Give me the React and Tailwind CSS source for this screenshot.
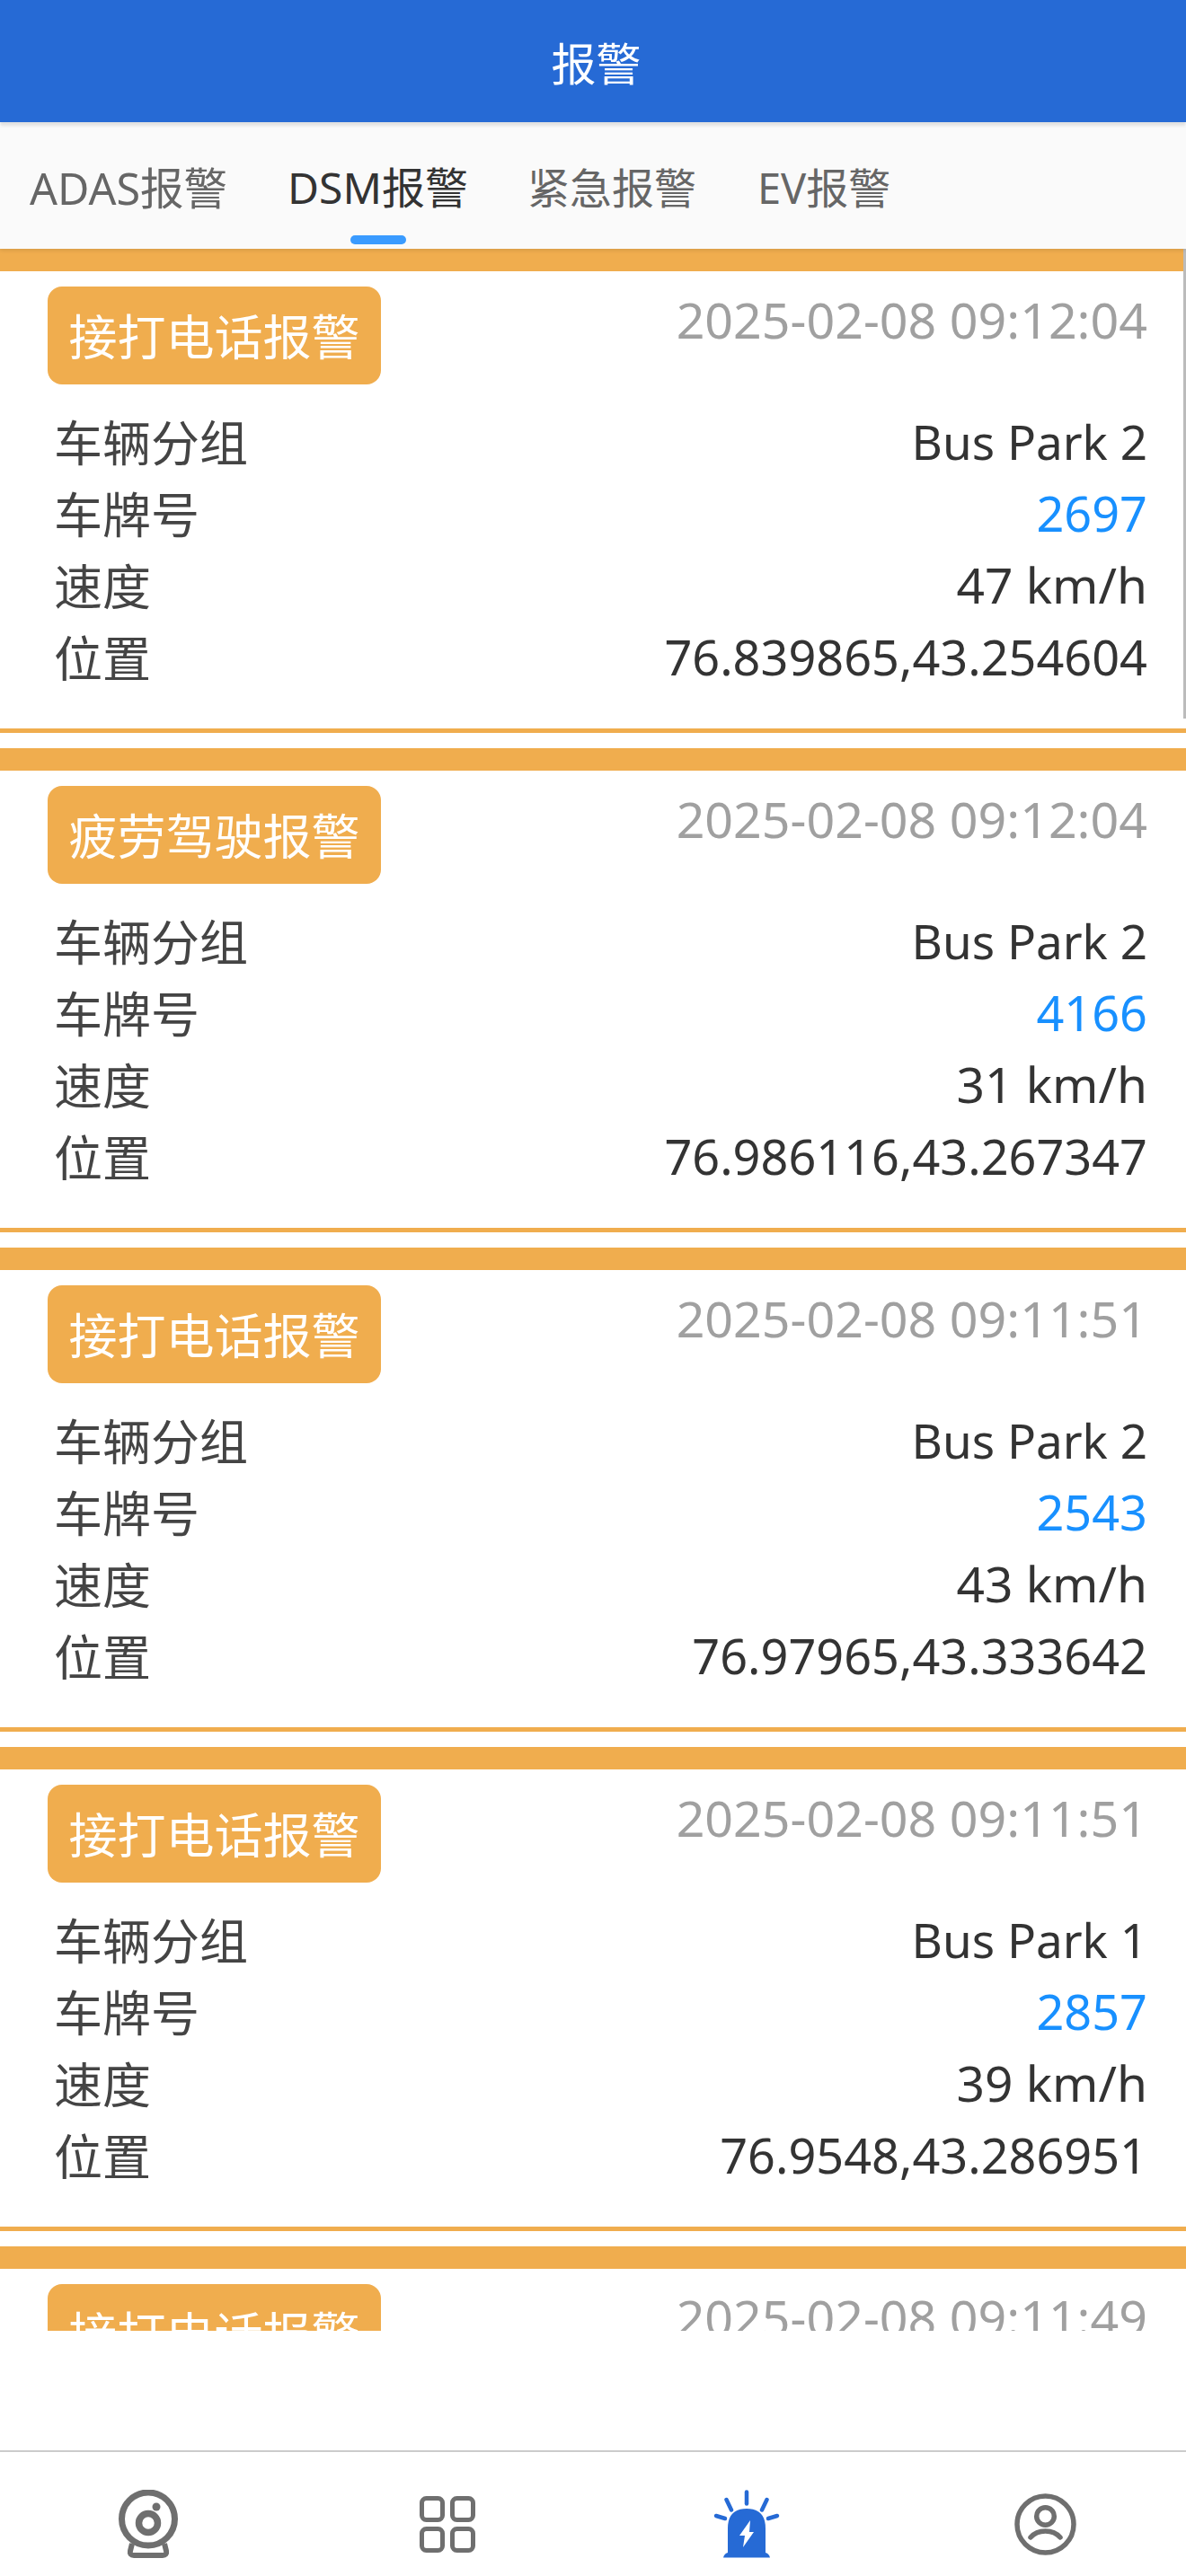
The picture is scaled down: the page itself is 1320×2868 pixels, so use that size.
const cards = [
  ["接打电话报警", "2025-02-08 09:12:04", "Bus Park 2", "2697", "47 km/h", "76.839865,43.254604"],
  ["疲劳驾驶报警", "2025-02-08 09:12:04", "Bus Park 2", "4166", "31 km/h", "76.986116,43.267347"],
  ["接打电话报警", "2025-02-08 09:11:51", "Bus Park 2", "2543", "43 km/h", "76.97965,43.333642"],
  ["接打电话报警", "2025-02-08 09:11:51", "Bus Park 1", "2857", "39 km/h", "76.9548,43.286951"],
  ["接打电话报警", "2025-02-08 09:11:49"],
];
const tabs = [
  ["ADAS报警", false, "text-[48.5px]"],
  ["DSM报警", true, "ml-[67px] text-[48px]"],
  ["紧急报警", false, "ml-[66px] text-[47px]"],
  ["EV报警", false, "ml-[68px] text-[47px]"],
];

function Row({ label, value, blue, size }) {
  return (
    <div className="flex h-[80px] items-center justify-between">
      <span className="text-[54px] text-[#444]">{label}</span>
      <span className={`pb-[3px] ${size} ${blue ? "text-[#1890ff]" : "text-[#333]"}`}>{value}</span>
    </div>
  );
}

function Card({ c }) {
  return (
    <div className="mb-[17px] h-[539px] shrink-0 border-t-[25px] border-b-[5px] border-[#f0ad4e] bg-white">
      <div className="flex items-start justify-between pt-[17px] pl-[53px] pr-[43px]">
        <div className="flex h-[109px] w-[371px] items-center justify-center rounded-[16px] bg-[#f0ad4e] pt-[4px] text-[54px] text-white">{c[0]}</div>
        <div className="mt-[-5px] text-[55.500px] text-[#a0a0a0]">{c[1]}</div>
      </div>
      {c[2] && (
        <div className="mt-[25px] pl-[60px] pr-[43px]">
          <Row label="车辆分组" value={c[2]} size="text-[53px]" />
          <Row label="车牌号" value={c[3]} size="text-[54px]" blue />
          <Row label="速度" value={c[4]} size="text-[55px]" />
          <Row label="位置" value={c[5]} size="text-[54px]" />
        </div>
      )}
    </div>
  );
}

function Cam() {
  return (
    <svg width="66" height="76" viewBox="0 0 66 76" fill="none" stroke="#6f6f6f">
      <circle cx="33" cy="32.500" r="29.500" strokeWidth="7" />
      <circle cx="33" cy="37" r="10.500" strokeWidth="7.500" />
      <circle cx="42" cy="19" r="4.500" fill="#6f6f6f" stroke="none" />
      <path d="M15 60l-2 8q-1 5 4 5h32q5 0 4-5l-2-8" strokeWidth="6" strokeLinejoin="round" />
    </svg>
  );
}
function Grid4() {
  return (
    <svg width="62" height="63" viewBox="0 0 62 63" fill="none" stroke="#6f6f6f" strokeWidth="5">
      <rect x="2.500" y="2.500" width="23" height="24" rx="5" />
      <rect x="36.500" y="2.500" width="23" height="24" rx="5" />
      <rect x="2.500" y="36.500" width="23" height="24" rx="5" />
      <rect x="36.500" y="36.500" width="23" height="24" rx="5" />
    </svg>
  );
}
function Alarm() {
  return (
    <svg width="74" height="76" viewBox="0 0 74 76" fill="none">
      <g stroke="#266ad5" strokeWidth="4.500" strokeLinecap="round">
        <path d="M37 2.500v13" />
        <path d="M14.500 11l5.500 11.500" />
        <path d="M59.500 11l-5.500 11.500" />
        <path d="M3 29l10 3" />
        <path d="M71 29l-10 3" />
      </g>
      <path d="M16 70V43q0-22 21-22t21 22v27q4 1 5 5.500H11q1-4.500 5-5.500z" fill="#266ad5" />
      <path d="M41 34L29 51h6l-2 13 12-17h-5z" fill="#fff" />
    </svg>
  );
}
function Profile() {
  return (
    <svg width="69" height="69" viewBox="0 0 69 69" fill="none" stroke="#6f6f6f">
      <circle cx="34.500" cy="34.500" r="31.500" strokeWidth="5.500" />
      <circle cx="34.500" cy="25.500" r="9.800" strokeWidth="5.500" />
      <path d="M18 49q6-7 16.500-7t16.500 7" strokeWidth="5.500" strokeLinecap="round" />
    </svg>
  );
}

export default function App() {
  return (
    <div
      className="flex h-[2868px] w-[1320px] flex-col overflow-hidden bg-white text-[53px]"
      style={{ fontFamily: '"Noto Sans", "Noto Sans CJK SC", sans-serif' }}
    >
      <header className="relative z-20 flex h-[136px] shrink-0 items-center justify-center bg-[#266ad5] pl-[7px] pt-[6px] text-[50px] text-white shadow-[0_4px_3px_rgba(0,0,0,0.12)]">
        报警
      </header>
      <nav className="relative z-10 mt-[5px] flex h-[136px] shrink-0 bg-[#fafafa] pl-[33px] shadow-[0_2px_4px_rgba(0,0,0,0.1)]">
        {tabs.map(([t, on, size]) => (
          <div key={t} className={`relative flex items-center ${size} ${on ? "text-[#333]" : "text-[#666]"}`}>
            {t}
            {on && <span className="absolute bottom-[5px] left-[70px] h-[10px] w-[62px] rounded-full bg-[#3a9bff]" />}
          </div>
        ))}
      </nav>
      <div className="relative h-[2318px] shrink-0 overflow-hidden">
        {cards.map((c, i) => <Card key={i} c={c} />)}
        <div className="absolute right-0 top-0 h-[523px] w-[3px] bg-[#bbb]" />
      </div>
      <div className="h-[133px] shrink-0" />
      <footer className="flex flex-1 items-center border-t-2 border-[#ccc] pt-[22px]">
        <div className="ml-[-2px] flex w-[333px] shrink-0 justify-center"><Cam /></div>
        <div className="flex w-[333px] shrink-0 justify-center"><Grid4 /></div>
        <div className="flex w-[333px] shrink-0 justify-center"><Alarm /></div>
        <div className="flex w-[333px] shrink-0 justify-center"><Profile /></div>
      </footer>
    </div>
  );
}
